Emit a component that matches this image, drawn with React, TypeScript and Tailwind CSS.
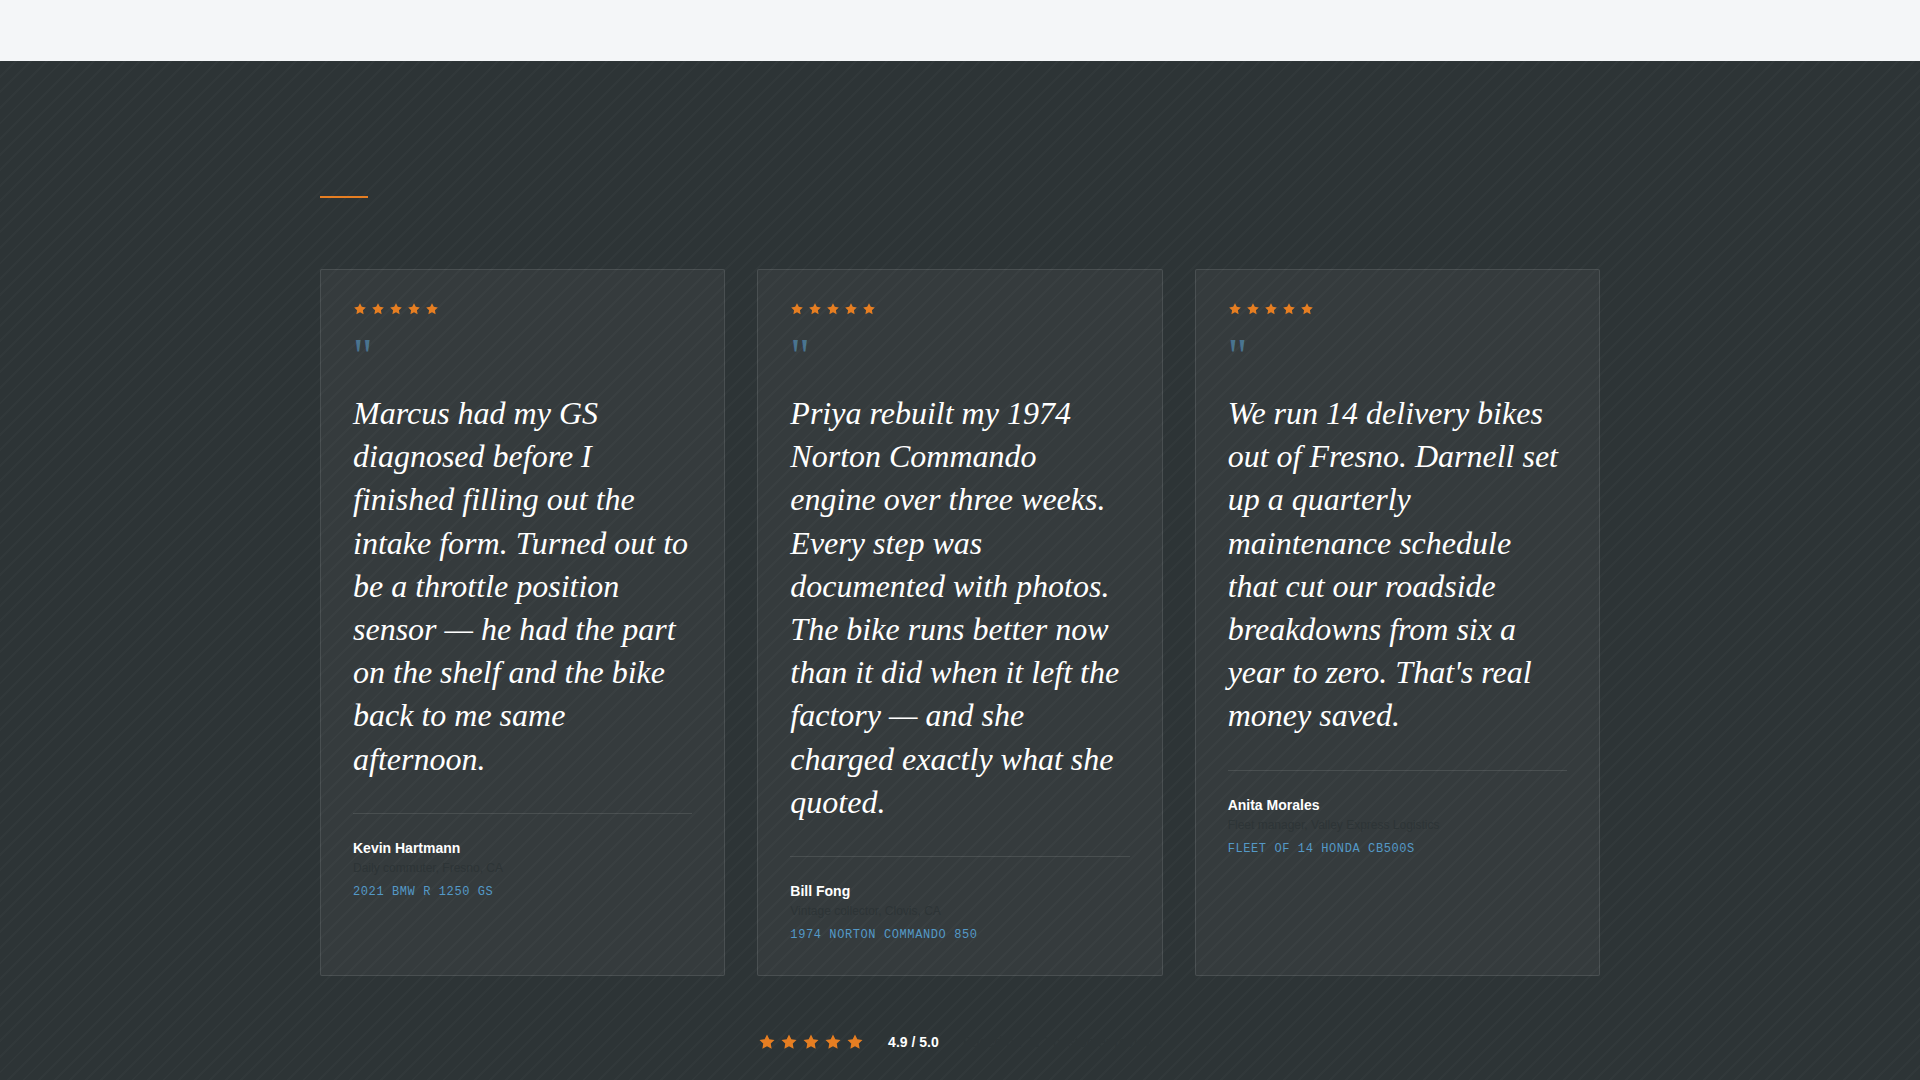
const CARDS = [
  {
    quote:
      'Marcus had my GS diagnosed before I finished filling out the intake form. Turned out to be a throttle position sensor — he had the part on the shelf and the bike back to me same afternoon.',
    name: 'Kevin Hartmann',
    role: 'Daily commuter, Fresno, CA',
    bike: '2021 BMW R 1250 GS',
  },
  {
    quote:
      'Priya rebuilt my 1974 Norton Commando engine over three weeks. Every step was documented with photos. The bike runs better now than it did when it left the factory — and she charged exactly what she quoted.',
    name: 'Bill Fong',
    role: 'Vintage collector, Clovis, CA',
    bike: '1974 NORTON COMMANDO 850',
  },
  {
    quote:
      "We run 14 delivery bikes out of Fresno. Darnell set up a quarterly maintenance schedule that cut our roadside breakdowns from six a year to zero. That's real money saved.",
    name: 'Anita Morales',
    role: 'Fleet manager, Valley Express Logistics',
    bike: 'FLEET OF 14 HONDA CB500S',
  },
];

function Stars({ className, gap }: { className: string; gap: string }) {
  return (
    <div className={`flex ${gap}`} role="img" aria-label="5 out of 5 stars">
      {[0, 1, 2, 3, 4].map((i) => (
        <svg key={i} viewBox="0 0 24 24" fill="#e67e22" className={className} aria-hidden="true">
          <path d="M12 2l3.09 6.26L22 9.27l-5 4.87 1.18 6.88L12 17.77l-6.18 3.25L7 14.14 2 9.27l6.91-1.01L12 2z" />
        </svg>
      ))}
    </div>
  );
}

export default function App() {
  return (
    <div className="min-h-screen bg-[#f4f6f8] pt-[61px] font-['Liberation_Sans',sans-serif]">
      <section className="bg-[#2d3436] bg-[repeating-linear-gradient(-45deg,transparent_0px,transparent_9px,rgba(255,255,255,0.02)_9px,rgba(255,255,255,0.02)_11px)] px-8 pt-[135px] pb-7">
        <div className="mx-auto max-w-7xl">
          <div className="h-0.5 w-12 bg-[#e67e22]" />
          <div className="mt-[71px] grid grid-cols-3 gap-8">
            {CARDS.map((c) => (
              <article key={c.name} className="rounded-xs border border-white/10 bg-white/4 p-8">
                <Stars className="size-3.5" gap="gap-1" />
                <div
                  className="mt-4 mb-3 font-['Liberation_Serif',serif] text-5xl leading-12 text-[#5dade2]/50"
                  aria-hidden="true"
                >
                  "
                </div>
                <blockquote className="font-['Liberation_Serif',serif] text-[32px] leading-[1.35] text-white italic">
                  {c.quote}
                </blockquote>
                <footer className="mt-8 border-t border-white/10 pt-6">
                  <div className="text-sm leading-5 font-bold text-white">{c.name}</div>
                  <div className="text-xs leading-5 text-[#2d3436]">{c.role}</div>
                  <div className="mt-1.5 font-['Liberation_Mono',monospace] text-xs leading-4 tracking-wider text-[#5499c7]">
                    {c.bike}
                  </div>
                </footer>
              </article>
            ))}
          </div>
          <div className="mt-14 flex items-center justify-center gap-6">
            <Stars className="size-[18px]" gap="gap-1" />
            <span className="text-sm leading-5 font-bold text-white">4.9 / 5.0</span>
            <span className="text-sm leading-5 text-[#2d3436]">Based on 312 customer reviews</span>
          </div>
        </div>
      </section>
    </div>
  );
}
